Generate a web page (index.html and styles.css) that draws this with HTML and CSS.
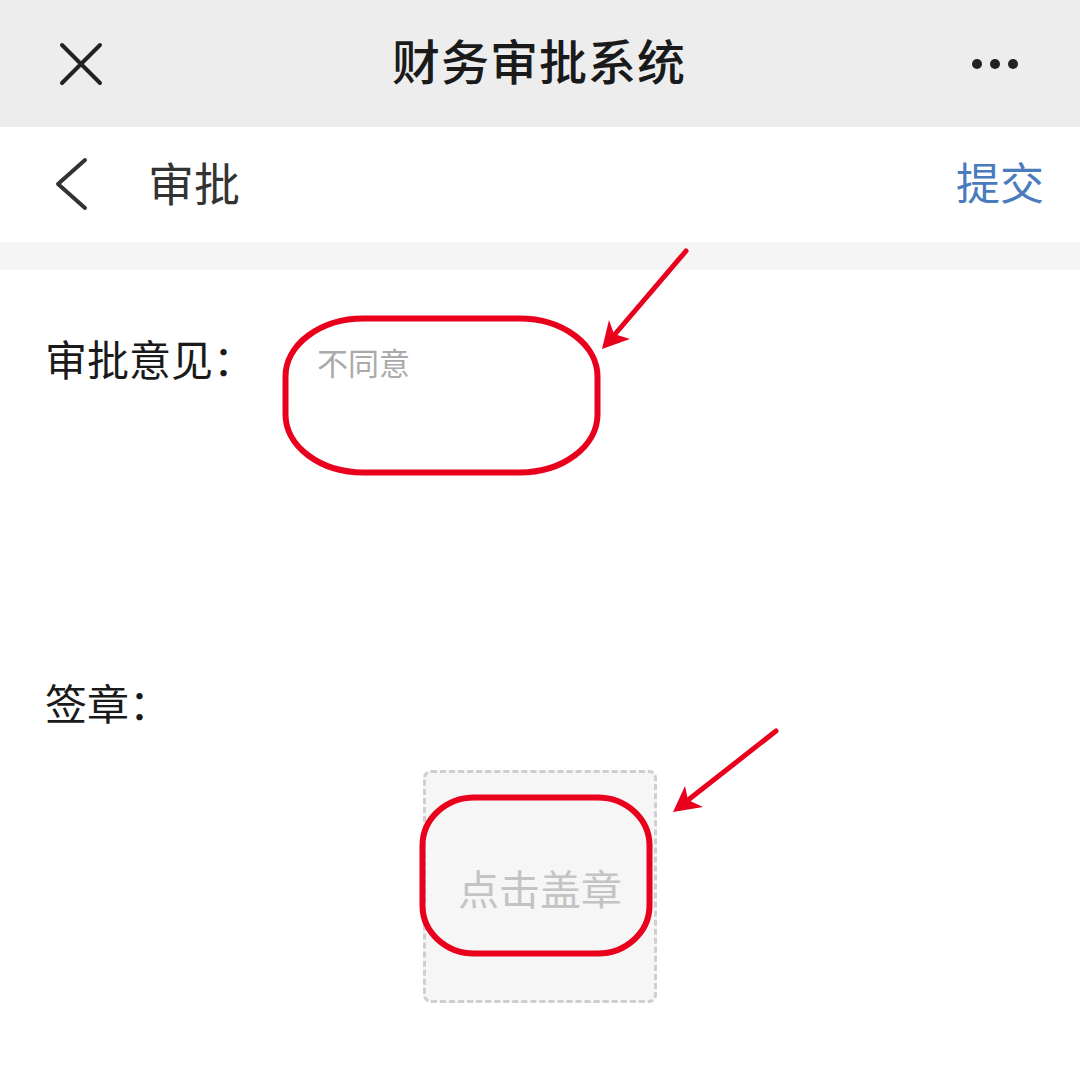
FILE: index.html
```html
<!DOCTYPE html>
<html lang="zh-CN">
<head>
<meta charset="utf-8">
<title>财务审批系统</title>
<link rel="stylesheet" href="styles.css">
</head>
<body>
<div class="page">
  <header class="topbar">
    <svg class="icon-close" width="48" height="48" viewBox="0 0 48 48"><path d="M5 5 L43 43 M43 5 L5 43" stroke="#222" stroke-width="4" stroke-linecap="round" fill="none"/></svg>
    <div class="title">财务审批系统</div>
    <svg class="icon-more" width="56" height="16" viewBox="0 0 56 16"><circle cx="8" cy="8" r="5" fill="#222"/><circle cx="26" cy="8" r="5" fill="#222"/><circle cx="44" cy="8" r="5" fill="#222"/></svg>
  </header>
  <nav class="navbar">
    <svg class="icon-back" width="40" height="56" viewBox="0 0 40 56"><path d="M33 4 L6 28 L33 52" stroke="#333" stroke-width="4" stroke-linecap="round" stroke-linejoin="round" fill="none"/></svg>
    <div class="nav-title">审批</div>
    <div class="nav-submit">提交</div>
  </nav>
  <div class="strip"></div>
  <main class="content">
    <div class="row row-opinion">
      <div class="label">审批意见：</div>
      <div class="textarea">不同意</div>
    </div>
    <div class="row-sign">
      <div class="label">签章：</div>
      <div class="stamp">点击盖章</div>
    </div>
  </main>
  <svg class="annot" width="1080" height="1080" viewBox="0 0 1080 1080">
    <rect x="285.5" y="318.5" width="312" height="154" rx="78" ry="58" fill="none" stroke="#e8001c" stroke-width="6"/>
    <path d="M686 251 L610 340" stroke="#e8001c" stroke-width="5" stroke-linecap="round" fill="none"/>
    <path d="M602 349 L609 320 L614 334 L630 339 Z" fill="#e8001c"/>
    <rect x="422.5" y="797.5" width="227" height="156" rx="52" ry="48" fill="none" stroke="#e8001c" stroke-width="6"/>
    <path d="M776 731 L683 804" stroke="#e8001c" stroke-width="5" stroke-linecap="round" fill="none"/>
    <path d="M673 812 L685 786 L688 800 L703 807 Z" fill="#e8001c"/>
  </svg>
</div>
</body>
</html>
```
FILE: styles.css
```css
html, body {
  margin: 0;
  padding: 0;
  background: #ffffff;
}
body {
  font-family: "Noto Sans CJK SC", "Noto Sans", sans-serif;
  color: #1a1a1a;
}
.page {
  position: relative;
  width: 1080px;
  height: 1080px;
  overflow: hidden;
}
.topbar {
  height: 127px;
  background: #ededed;
  display: flex;
  align-items: center;
  justify-content: space-between;
  padding: 0 55px 0 57px;
  box-sizing: border-box;
}
.title {
  font-size: 48px;
  line-height: 60px;
  font-weight: 500;
  color: #1a1a1a;
  letter-spacing: 1px;
  margin: 0 0 10px 4px;
}
.icon-more {
  display: block;
}
.navbar {
  height: 115px;
  background: #fff;
  display: flex;
  align-items: center;
  padding: 0 36px 0 52px;
  box-sizing: border-box;
}
.icon-back {
  display: block;
  margin-bottom: 2px;
}
.nav-title {
  font-size: 46px;
  line-height: 60px;
  color: #333;
  margin: 0 0 8px 56px;
  flex: 1;
}
.nav-submit {
  font-size: 44px;
  line-height: 60px;
  color: #4a7bbd;
  margin-bottom: 8px;
}
.strip {
  height: 28px;
  background: #f5f5f5;
}
.content {
  padding: 60px 0 0 45px;
}
.label {
  font-size: 42px;
  line-height: 56px;
  color: #1a1a1a;
}
.row-opinion {
  display: flex;
  height: 344px;
}
.textarea {
  margin-left: 46px;
  padding: 10px 16px 0 16px;
  font-size: 31px;
  line-height: 44px;
  color: #aaa;
}
.row-sign {
  display: flex;
  flex-direction: column;
}
.stamp {
  margin-top: 40px;
  margin-left: 378px;
  width: 234px;
  height: 233px;
  box-sizing: border-box;
  border: 3px dashed #cfcfcf;
  border-radius: 8px;
  background: #f6f6f6;
  display: flex;
  align-items: center;
  justify-content: center;
  font-size: 41px;
  color: #c4c4c4;
}
.annot {
  position: absolute;
  left: 0;
  top: 0;
  pointer-events: none;
}
```
